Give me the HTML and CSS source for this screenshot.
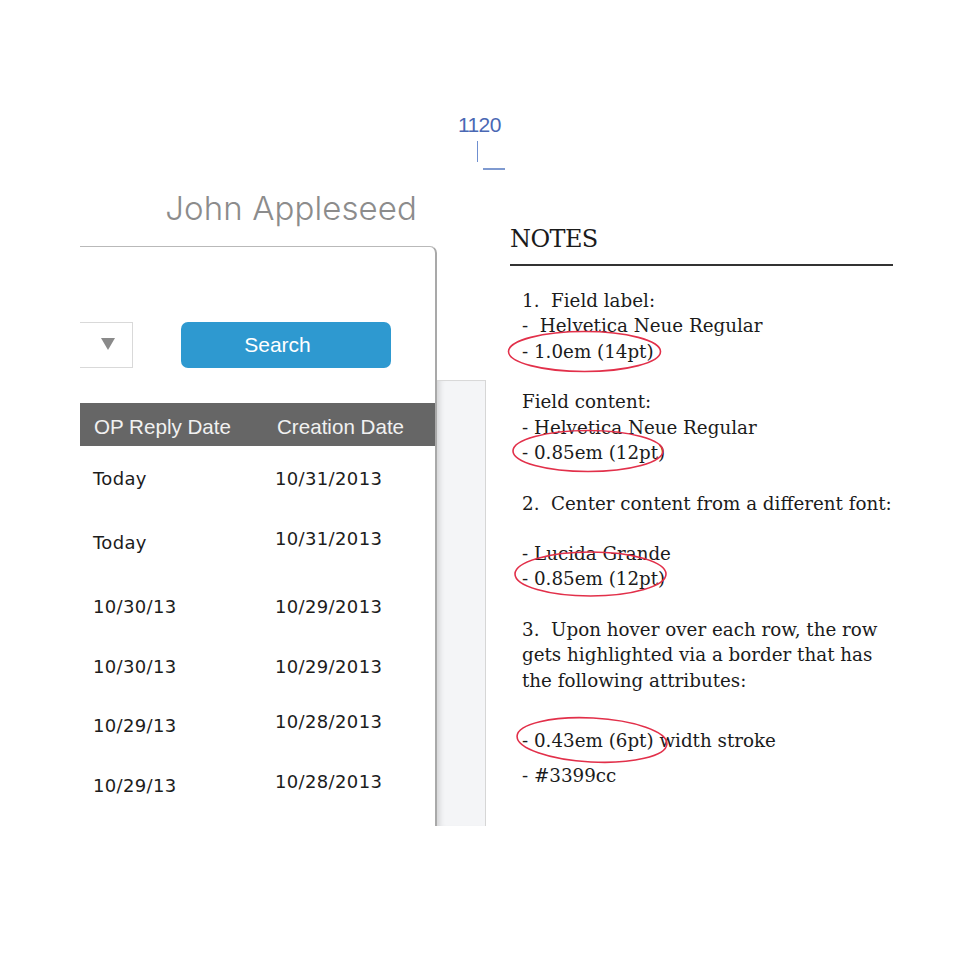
FILE: index.html
```html
<!DOCTYPE html>
<html lang="en">
<head>
<meta charset="utf-8">
<title>Spec</title>
<link rel="stylesheet" href="styles.css">
</head>
<body>
<div class="page">
  <div class="marker">
    <div class="marker-num">1120</div>
    <div class="tick"><span class="tick-v"></span><span class="tick-h"></span></div>
  </div>
  <div class="stage">
    <div class="left">
      <div class="title">John Appleseed</div>
      <div class="board">
        <div class="card">
          <div class="filters">
            <div class="select"><span class="caret"></span></div>
            <div class="btn">Search</div>
          </div>
          <div class="thead">
            <div class="c1">OP Reply Date</div>
            <div class="c2">Creation Date</div>
          </div>
          <div class="row r-tall"><div class="c1">Today</div><div class="c2">10/31/2013</div></div>
          <div class="row r-tall"><div class="c1">Today</div><div class="c2 up">10/31/2013</div></div>
          <div class="row"><div class="c1">10/30/13</div><div class="c2">10/29/2013</div></div>
          <div class="row"><div class="c1">10/30/13</div><div class="c2">10/29/2013</div></div>
          <div class="row"><div class="c1">10/29/13</div><div class="c2 up">10/28/2013</div></div>
          <div class="row"><div class="c1">10/29/13</div><div class="c2 up">10/28/2013</div></div>
        </div>
        <div class="side"></div>
      </div>
    </div>
    <div class="notes">
      <div class="notes-h">NOTES</div>
      <div class="notes-body">
        <div class="para">
          <div class="ln">1.  Field label:</div>
          <div class="ln">-  Helvetica Neue Regular</div>
          <div class="ln">- 1.0em (14pt)</div>
        </div>
        <div class="para sp">
          <div class="ln">Field content:</div>
          <div class="ln">- Helvetica Neue Regular</div>
          <div class="ln">- 0.85em (12pt)</div>
        </div>
        <div class="para sp">
          <div class="ln">2.  Center content from a different font:</div>
        </div>
        <div class="para sp">
          <div class="ln">- Lucida Grande</div>
          <div class="ln">- 0.85em (12pt)</div>
        </div>
        <div class="para sp">
          <div class="ln">3.  Upon hover over each row, the row</div>
          <div class="ln">gets highlighted via a border that has</div>
          <div class="ln">the following attributes:</div>
        </div>
        <div class="para sp-lg">
          <div class="ln">- 0.43em (6pt) width stroke</div>
        </div>
        <div class="para sp-sm">
          <div class="ln">- #3399cc</div>
        </div>
      </div>
    </div>
  </div>
  <svg class="marks" width="978" height="978" viewBox="0 0 978 978" aria-hidden="true">
    <ellipse cx="584.5" cy="351.5" rx="76" ry="20"/>
    <ellipse cx="588" cy="451" rx="75" ry="20.5"/>
    <ellipse cx="590.5" cy="574" rx="75.5" ry="22"/>
    <ellipse cx="592" cy="740" rx="75" ry="22" transform="rotate(3 592 740)"/>
  </svg>
</div>
</body>
</html>
```
FILE: styles.css
```css
html, body {
  margin: 0;
  padding: 0;
  background: #ffffff;
}

.page {
  position: relative;
  width: 978px;
  height: 978px;
  overflow: hidden;
  background: #ffffff;
}

/* top measurement marker */
.marker {
  height: 188px;
  box-sizing: border-box;
  padding-top: 113px;
  padding-left: 458px;
}

.marker-num {
  font-family: "Liberation Sans", Arial, sans-serif;
  font-size: 21px;
  line-height: 24px;
  letter-spacing: -0.6px;
  color: #4a68b4;
}

.tick {
  display: flex;
  align-items: flex-start;
  margin-top: 4px;
  margin-left: 19px;
}

.tick-v {
  display: block;
  width: 1px;
  height: 21px;
  background: #6f8fd0;
}

.tick-h {
  display: block;
  width: 22px;
  height: 1.5px;
  margin-left: 5px;
  margin-top: 27px;
  background: #7f9ad0;
}

/* main stage */
.stage {
  display: flex;
  align-items: flex-start;
  padding-left: 80px;
}

.left {
  width: 406px;
  display: flex;
  flex-direction: column;
}

.title {
  font-family: Inter, "Liberation Sans", sans-serif;
  font-weight: 300;
  font-size: 33px;
  line-height: 40px;
  letter-spacing: 0.1px;
  color: #8c8c8c;
  text-align: right;
  padding-right: 69px;
  height: 40px;
  margin-bottom: 18px;
}

.board {
  display: flex;
  align-items: flex-start;
}

.card {
  width: 357px;
  height: 580px;
  box-sizing: border-box;
  border-top: 1px solid #b9b9b9;
  border-right: 2px solid #a9a9a9;
  border-top-right-radius: 7px;
  background: #ffffff;
}

.filters {
  display: flex;
  padding-top: 75px;
}

.select {
  width: 53px;
  height: 46px;
  box-sizing: border-box;
  border: 1px solid #d9d9d9;
  border-left: none;
  display: flex;
  align-items: center;
}

.caret {
  display: block;
  width: 0;
  height: 0;
  margin-left: 21px;
  margin-top: -2px;
  border-left: 7px solid transparent;
  border-right: 7px solid transparent;
  border-top: 12px solid #8a8a8a;
}

.btn {
  width: 210px;
  height: 46px;
  margin-left: 48px;
  box-sizing: border-box;
  padding-right: 17px;
  border-radius: 7px;
  background: #2e99d0;
  color: #ffffff;
  font-family: "Liberation Sans", Arial, sans-serif;
  font-size: 21px;
  line-height: 46px;
  text-align: center;
}

.thead {
  display: flex;
  height: 43px;
  margin-top: 35px;
  box-sizing: border-box;
  padding-top: 5px;
  background: #666666;
  color: #f1f1f1;
  font-family: "Liberation Sans", Arial, sans-serif;
  font-size: 20.6px;
  line-height: 38px;
}

.thead .c1 {
  width: 195px;
  box-sizing: border-box;
  padding-left: 14px;
}

.thead .c2 {
  padding-left: 2px;
}

.row {
  display: flex;
  align-items: flex-start;
  height: 59.5px;
  box-sizing: border-box;
  padding-top: 22px;
  font-family: "DejaVu Sans", Verdana, sans-serif;
  font-size: 18px;
  line-height: 22px;
  letter-spacing: 0.35px;
  color: #1c1c1c;
}

.row.r-tall {
  height: 64px;
}

.row .c1 {
  width: 195px;
  box-sizing: border-box;
  padding-left: 13px;
}

.row .c2.up {
  margin-top: -4px;
}

.side {
  width: 49px;
  height: 446px;
  margin-top: 134px;
  box-sizing: border-box;
  border-top: 1px solid #d9d9d9;
  border-right: 1px solid #d6d6d6;
  background: #f4f5f7;
  box-shadow: inset 7px 0 6px -5px rgba(0, 0, 0, 0.16);
}

/* notes */
.notes {
  width: 383px;
  margin-left: 24px;
  margin-top: 35.7px;
  color: #1b1b1b;
}

.notes-h {
  font-family: "DejaVu Serif", "Liberation Serif", serif;
  font-size: 24px;
  line-height: 30px;
  letter-spacing: -0.6px;
  padding-bottom: 10.3px;
  border-bottom: 2px solid #333333;
}

.notes-body {
  padding-top: 22.2px;
  padding-left: 12px;
  font-family: "DejaVu Serif", "Liberation Serif", serif;
  font-size: 18.3px;
  line-height: 25.3px;
}

.ln {
  white-space: pre;
}

.para.sp {
  margin-top: 25.3px;
}

.para.sp-lg {
  margin-top: 35.5px;
}

.para.sp-sm {
  margin-top: 9.5px;
}

.marks {
  position: absolute;
  top: 0;
  left: 0;
  pointer-events: none;
}

.marks ellipse {
  fill: none;
  stroke: #e2304a;
  stroke-width: 1.6;
}
```
